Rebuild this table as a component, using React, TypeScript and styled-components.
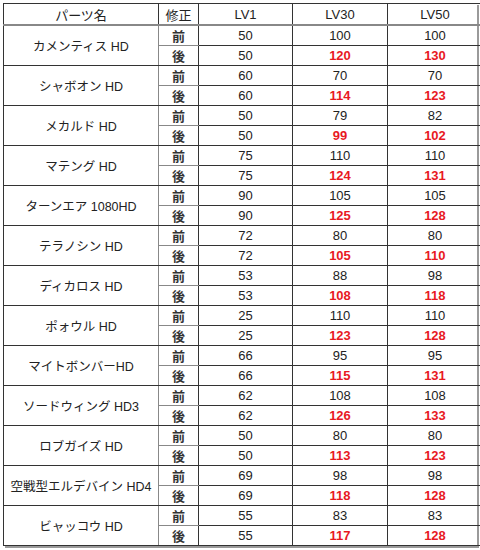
import React from 'react';
import styled, { createGlobalStyle } from 'styled-components';

// パーツごとの修正前後の値
interface Part {
  name: string;
  before: number[];
  after: number[];
}

const parts: Part[] = [
  { name: 'カメンティス HD', before: [50, 100, 100], after: [50, 120, 130] },
  { name: 'シャボオン HD', before: [60, 70, 70], after: [60, 114, 123] },
  { name: 'メカルド HD', before: [50, 79, 82], after: [50, 99, 102] },
  { name: 'マテング HD', before: [75, 110, 110], after: [75, 124, 131] },
  { name: 'ターンエア 1080HD', before: [90, 105, 105], after: [90, 125, 128] },
  { name: 'テラノシン HD', before: [72, 80, 80], after: [72, 105, 110] },
  { name: 'ディカロス HD', before: [53, 88, 98], after: [53, 108, 118] },
  { name: 'ポォウル HD', before: [25, 110, 110], after: [25, 123, 128] },
  { name: 'マイトボンバーHD', before: [66, 95, 95], after: [66, 115, 131] },
  { name: 'ソードウィング HD3', before: [62, 108, 108], after: [62, 126, 133] },
  { name: 'ロブガイズ HD', before: [50, 80, 80], after: [50, 113, 123] },
  { name: '空戦型エルデバイン HD4', before: [69, 98, 98], after: [69, 118, 128] },
  { name: 'ビャッコウ HD', before: [55, 83, 83], after: [55, 117, 128] },
];

const GlobalStyle = createGlobalStyle`
  body {
    margin: 0;
    padding: 3px;
    background: #ffffff;
    font-family: "Liberation Sans", "Noto Sans CJK JP", sans-serif;
  }
`;

const Frame = styled.div`
  width: 474px;
  box-shadow: 2px 2px 0 #9a9a9a;
`;

const Table = styled.table`
  width: 474px;
  border-collapse: collapse;
  table-layout: fixed;
  font-size: 13px;
  color: #222;
  border: 1px solid #333;
`;

const HeadCell = styled.th<{ $w: number }>`
  width: ${(p) => p.$w}px;
  height: 20px;
  padding: 0;
  font-weight: normal;
  text-align: center;
  border: 1px solid #333;
  border-bottom: 2px solid #888;
`;

const NameCell = styled.td`
  height: 19px;
  padding: 0;
  text-align: center;
  font-size: 12.5px;
  border: 1px solid #333;
  border-right: 1px solid #888;
`;

const FixCell = styled.td<{ $top?: boolean }>`
  height: 19px;
  padding: 0;
  text-align: center;
  font-weight: bold;
  color: #333;
  border-left: 1px solid #888;
  border-right: 1px solid #333;
  border-top: 1px solid ${(p) => (p.$top ? '#333' : '#888')};
  border-bottom: 1px solid ${(p) => (p.$top ? '#888' : '#333')};
`;

const ValueCell = styled.td<{ $changed?: boolean }>`
  height: 19px;
  padding: 0;
  text-align: center;
  font-size: 13px;
  color: ${(p) => (p.$changed ? '#e8191f' : '#222')};
  font-weight: ${(p) => (p.$changed ? 'bold' : 'normal')};
  border: 1px solid #333;
`;

const App: React.FC = () => {
  return (
    <>
      <GlobalStyle />
      <Frame>
        <Table>
          <thead>
            <tr>
              <HeadCell $w={154}>パーツ名</HeadCell>
              <HeadCell $w={39}>修正</HeadCell>
              <HeadCell $w={93}>LV1</HeadCell>
              <HeadCell $w={94}>LV30</HeadCell>
              <HeadCell $w={94}>LV50</HeadCell>
            </tr>
          </thead>
          <tbody>
            {parts.map((part) => (
              <React.Fragment key={part.name}>
                <tr>
                  <NameCell rowSpan={2}>{part.name}</NameCell>
                  <FixCell $top>前</FixCell>
                  {part.before.map((v, i) => (
                    <ValueCell key={i}>{v}</ValueCell>
                  ))}
                </tr>
                <tr>
                  <FixCell>後</FixCell>
                  {part.after.map((v, i) => (
                    <ValueCell key={i} $changed={i > 0}>
                      {v}
                    </ValueCell>
                  ))}
                </tr>
              </React.Fragment>
            ))}
          </tbody>
        </Table>
      </Frame>
    </>
  );
};

export default App;
